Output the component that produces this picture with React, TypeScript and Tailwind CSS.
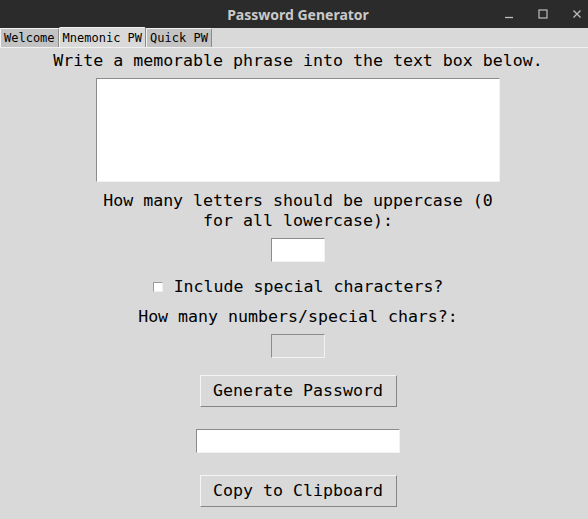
import { useState } from "react"

const mono = "font-['DejaVu_Sans_Mono','Liberation_Mono',monospace]"

const tabs = ["Welcome", "Mnemonic PW", "Quick PW"]

function Entry({ className, disabled }: { className: string; disabled?: boolean }) {
  return (
    <div
      className={`h-[24px] border border-t-[#8c8c8c] border-l-[#8c8c8c] border-b-[#f2f2f2] border-r-[#f2f2f2] ${
        disabled ? "bg-[#d9d9d9]" : "bg-white"
      } ${className}`}
    />
  )
}

function TkButton({ label }: { label: string }) {
  return (
    <button className="w-[197px] h-[32px] bg-[#d9d9d9] border border-t-[#f5f5f5] border-l-[#f5f5f5] border-b-[#858585] border-r-[#858585] text-[16.6px] leading-[20px] text-black">
      {label}
    </button>
  )
}

export default function App() {
  const [active] = useState(1)

  return (
    <div className={`w-[588px] h-[519px] bg-[#d9d9d9] flex flex-col overflow-hidden ${mono}`}>
      <div className="h-[28px] bg-[#2b2b2b] grid grid-cols-[1fr_auto_1fr] items-center">
        <div />
        <div className="font-['Noto_Sans',sans-serif] font-bold text-[14px] text-[#c9c9c9] pl-[8px]">
          Password Generator
        </div>
        <div className="flex items-center justify-end gap-[24px] pr-[6px] text-[#bdbdbd]">
          <svg width="10" height="10" viewBox="0 0 10 10">
            <path d="M1 8.5h8" stroke="currentColor" strokeWidth="1.3" />
          </svg>
          <svg width="10" height="10" viewBox="0 0 10 10">
            <rect x="1" y="1" width="8" height="8" fill="none" stroke="currentColor" strokeWidth="1.2" />
          </svg>
          <svg width="10" height="10" viewBox="0 0 10 10">
            <path d="M1.5 1.5l7 7M8.5 1.5l-7 7" stroke="currentColor" strokeWidth="1.3" />
          </svg>
        </div>
      </div>

      <div className="h-[20px] flex items-end border-b border-b-[#f0f0f0] bg-[#d9d9d9]">
        {tabs.map((t, i) => (
          <div
            key={t}
            className={`px-[3px] text-[12px] leading-[16px] text-black border-l border-l-[#f2f2f2] border-r border-r-[#8a8a8a] border-t border-t-[#f2f2f2] rounded-tl-[2px] rounded-tr-[2px] ${
              i === active ? "h-[20px] bg-[#d9d9d9] pt-[2px]" : "h-[19px] bg-[#c3c3c3] pt-[1px]"
            }`}
          >
            {t}
          </div>
        ))}
      </div>

      <div className="flex flex-col items-center pl-[8px] text-[16.6px] leading-[20px] text-black">
        <div className="mt-[3px]">Write a memorable phrase into the text box below.</div>
        <div className="mt-[7px] w-[404px] h-[104px] bg-white border border-t-[#8c8c8c] border-l-[#8c8c8c] border-b-[#f2f2f2] border-r-[#f2f2f2]" />
        <div className="mt-[9px] text-center">
          How many letters should be uppercase (0
          <br />
          for all lowercase):
        </div>
        <Entry className="mt-[7px] w-[54px]" />
        <div className="mt-[15px] flex items-center gap-[11px]">
          <div className="w-[10px] h-[10px] bg-white border border-t-[#9a9a9a] border-l-[#9a9a9a] border-b-[#eeeeee] border-r-[#eeeeee]" />
          <span>Include special characters?</span>
        </div>
        <div className="mt-[10px]">How many numbers/special chars?:</div>
        <Entry className="mt-[7px] w-[54px]" disabled />
        <div className="mt-[17px]">
          <TkButton label="Generate Password" />
        </div>
        <Entry className="mt-[22px] w-[204px]" />
        <div className="mt-[22px]">
          <TkButton label="Copy to Clipboard" />
        </div>
      </div>
    </div>
  )
}
